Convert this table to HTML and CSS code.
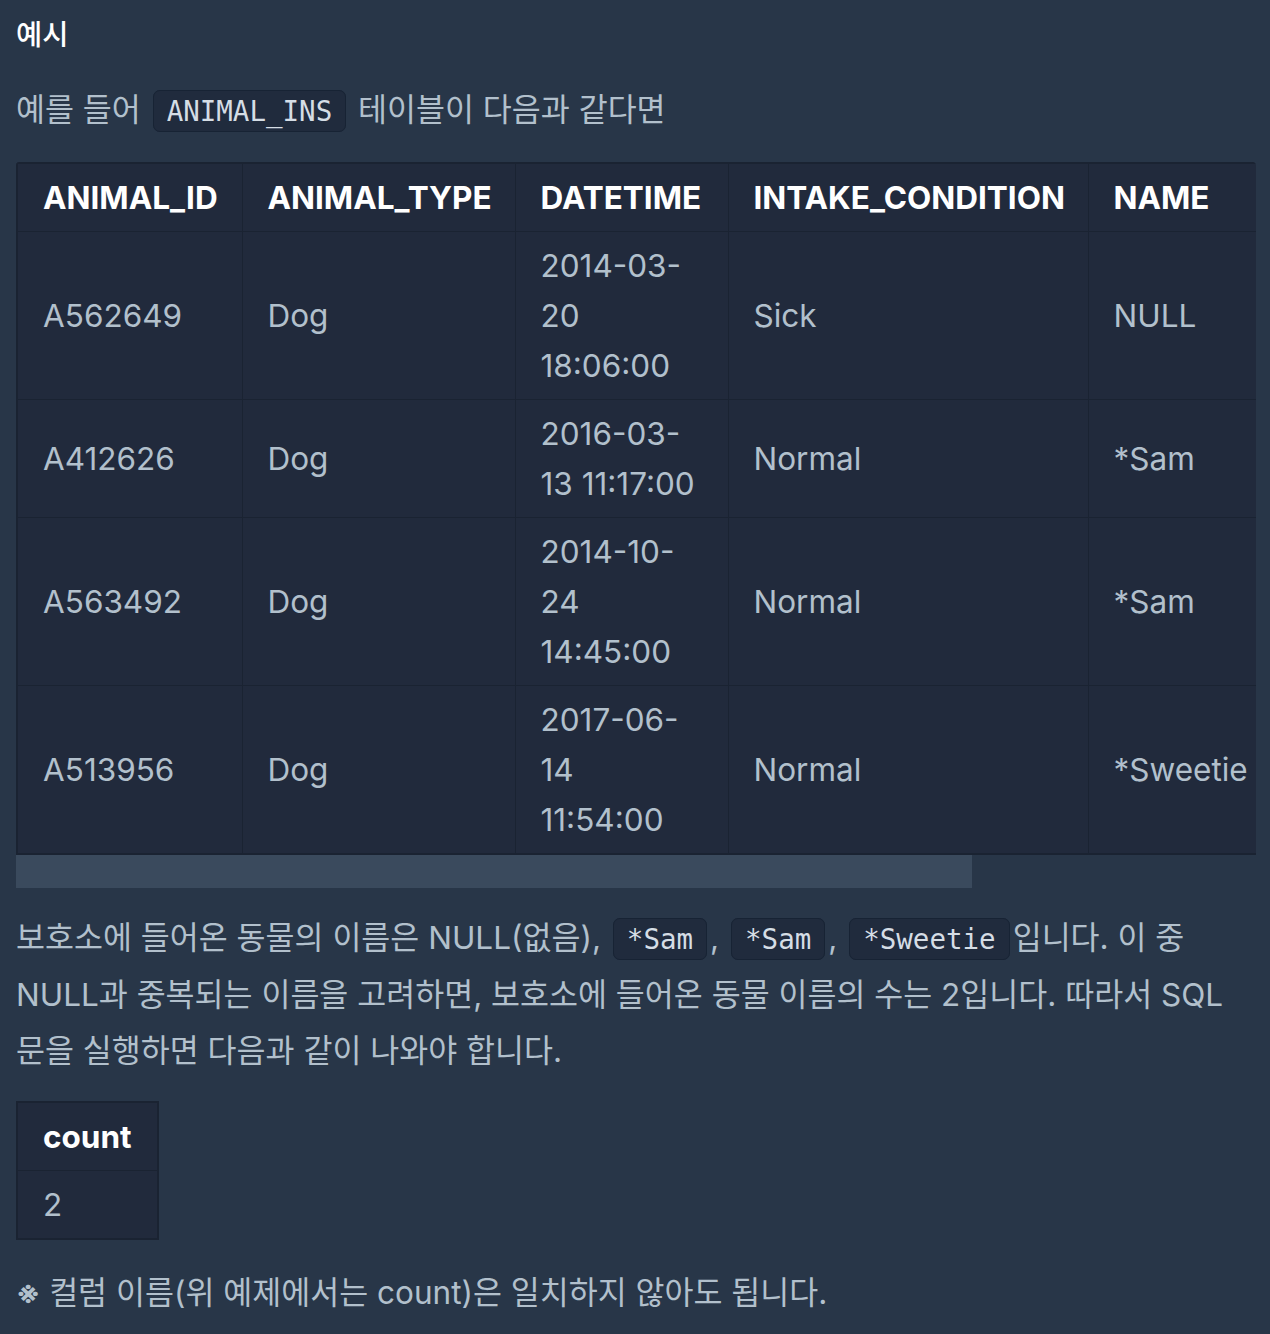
FILE: index.html
```html
<!DOCTYPE html>
<html lang="ko">
<head>
    <meta charset="UTF-8">
    <meta name="viewport" content="width=device-width, initial-scale=1.0">
    <title>예시</title>
    <link rel="stylesheet" href="styles.css">
</head>
<body>
    <div class="guide">
        <h5 class="title">예시</h5>

        <p>예를 들어 <code>ANIMAL_INS</code> 테이블이 다음과 같다면</p>

        <div class="table-wrap">
            <table class="data">
                <colgroup>
                    <col class="c-id">
                    <col class="c-type">
                    <col class="c-date">
                    <col class="c-cond">
                    <col class="c-name">
                    <col class="c-sex">
                </colgroup>
                <thead>
                    <tr>
                        <th>ANIMAL_ID</th>
                        <th>ANIMAL_TYPE</th>
                        <th>DATETIME</th>
                        <th>INTAKE_CONDITION</th>
                        <th>NAME</th>
                        <th>SEX_UPON_INTAKE</th>
                    </tr>
                </thead>
                <tbody>
                    <tr>
                        <td>A562649</td>
                        <td>Dog</td>
                        <td>2014-03-20 18:06:00</td>
                        <td>Sick</td>
                        <td>NULL</td>
                        <td>Spayed Female</td>
                    </tr>
                    <tr>
                        <td>A412626</td>
                        <td>Dog</td>
                        <td>2016-03-13 11:17:00</td>
                        <td>Normal</td>
                        <td>*Sam</td>
                        <td>Spayed Female</td>
                    </tr>
                    <tr>
                        <td>A563492</td>
                        <td>Dog</td>
                        <td>2014-10-24 14:45:00</td>
                        <td>Normal</td>
                        <td>*Sam</td>
                        <td>Neutered Male</td>
                    </tr>
                    <tr>
                        <td>A513956</td>
                        <td>Dog</td>
                        <td>2017-06-14 11:54:00</td>
                        <td>Normal</td>
                        <td>*Sweetie</td>
                        <td>Spayed Female</td>
                    </tr>
                </tbody>
            </table>
        </div>
        <div class="scrollbar"><div class="thumb"></div></div>

        <p>보호소에 들어온 동물의 이름은 NULL(없음), <code>*Sam</code>, <code>*Sam</code>, <code>*Sweetie</code>입니다. 이 중 NULL과 중복되는 이름을 고려하면, 보호소에 들어온 동물 이름의 수는 2입니다. 따라서 SQL 문을 실행하면 다음과 같이 나와야 합니다.</p>

        <table class="data small">
            <thead>
                <tr>
                    <th>count</th>
                </tr>
            </thead>
            <tbody>
                <tr>
                    <td>2</td>
                </tr>
            </tbody>
        </table>

        <p class="note"><span class="mark">※</span> 컬럼 이름(위 예제에서는 count)은 일치하지 않아도 됩니다.</p>
    </div>
</body>
</html>
```

FILE: styles.css
```css
* {
    box-sizing: border-box;
}

body {
    margin: 0;
    background-color: #283648;
    color: #b2c0cc;
    font-family: Inter, "Noto Sans CJK KR", sans-serif;
}

.guide {
    padding: 0 14px 0 16px;
    font-size: 31.5px;
    line-height: 56px;
}

.title {
    margin: 0;
    padding-top: 8px;
    color: #ffffff;
    font-size: 28.5px;
    font-weight: 500;
    line-height: 54px;
}

p {
    margin: 20px 0 23px 0;
}

code {
    margin: 0 3px;
    padding: 4px 13px;
    background-color: #202b3d;
    border: 1px solid #172334;
    border-radius: 7px;
    color: #d5dde5;
    font-family: "DejaVu Sans Mono", monospace;
    font-size: 27.5px;
}

.table-wrap {
    overflow: hidden;
    border-radius: 4px 4px 0 0;
}

table.data {
    border-collapse: collapse;
    background-color: #212a3c;
    border: 2px solid #1a2332;
    line-height: 50px;
}

.table-wrap table.data {
    width: 1608px;
    table-layout: fixed;
}

.c-id { width: 225px; }
.c-type { width: 273px; }
.c-date { width: 213px; }
.c-cond { width: 360px; }
.c-name { width: 185px; }
.c-sex { width: 352px; }

.data th,
.data td {
    padding: 9px 25px 8px 25px;
    border: 1px solid #1a2332;
    text-align: left;
    vertical-align: middle;
}

.data th {
    color: #ffffff;
    font-weight: 700;
}

.scrollbar {
    height: 33px;
}

.scrollbar .thumb {
    width: 956px;
    height: 100%;
    background-color: #3a4a5d;
}

.scrollbar + p {
    margin-top: 22px;
    margin-bottom: 22px;
}

.small {
    margin-bottom: 25px;
}

.note {
    margin: 0;
}

.mark {
    font-size: 30px;
    font-weight: 700;
}
```
